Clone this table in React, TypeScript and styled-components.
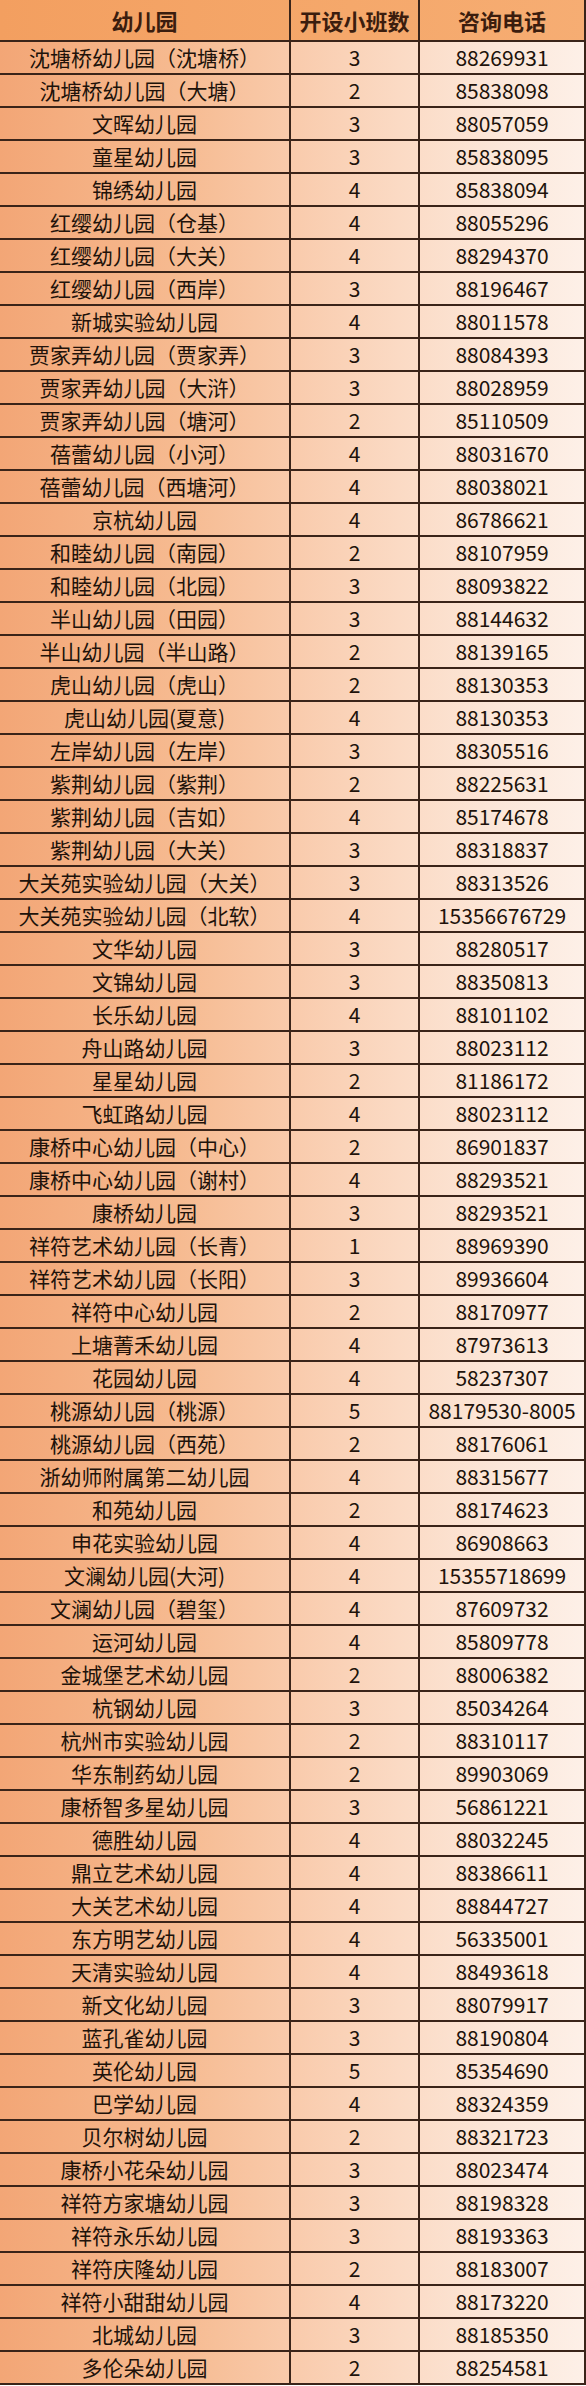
import React from 'react';
import styled, { createGlobalStyle } from 'styled-components';

const GlobalStyle = createGlobalStyle`
  html, body {
    margin: 0;
    padding: 0;
    background: #ffffff;
  }
  body {
    font-family: "Noto Sans CJK SC", "Noto Sans", "Liberation Sans", sans-serif;
  }
`;

type Row = [string, number, string];

const ROWS: Row[] = [
  ['沈塘桥幼儿园（沈塘桥）', 3, '88269931'],
  ['沈塘桥幼儿园（大塘）', 2, '85838098'],
  ['文晖幼儿园', 3, '88057059'],
  ['童星幼儿园', 3, '85838095'],
  ['锦绣幼儿园', 4, '85838094'],
  ['红缨幼儿园（仓基）', 4, '88055296'],
  ['红缨幼儿园（大关）', 4, '88294370'],
  ['红缨幼儿园（西岸）', 3, '88196467'],
  ['新城实验幼儿园', 4, '88011578'],
  ['贾家弄幼儿园（贾家弄）', 3, '88084393'],
  ['贾家弄幼儿园（大浒）', 3, '88028959'],
  ['贾家弄幼儿园（塘河）', 2, '85110509'],
  ['蓓蕾幼儿园（小河）', 4, '88031670'],
  ['蓓蕾幼儿园（西塘河）', 4, '88038021'],
  ['京杭幼儿园', 4, '86786621'],
  ['和睦幼儿园（南园）', 2, '88107959'],
  ['和睦幼儿园（北园）', 3, '88093822'],
  ['半山幼儿园（田园）', 3, '88144632'],
  ['半山幼儿园（半山路）', 2, '88139165'],
  ['虎山幼儿园（虎山）', 2, '88130353'],
  ['虎山幼儿园(夏意)', 4, '88130353'],
  ['左岸幼儿园（左岸）', 3, '88305516'],
  ['紫荆幼儿园（紫荆）', 2, '88225631'],
  ['紫荆幼儿园（吉如）', 4, '85174678'],
  ['紫荆幼儿园（大关）', 3, '88318837'],
  ['大关苑实验幼儿园（大关）', 3, '88313526'],
  ['大关苑实验幼儿园（北软）', 4, '15356676729'],
  ['文华幼儿园', 3, '88280517'],
  ['文锦幼儿园', 3, '88350813'],
  ['长乐幼儿园', 4, '88101102'],
  ['舟山路幼儿园', 3, '88023112'],
  ['星星幼儿园', 2, '81186172'],
  ['飞虹路幼儿园', 4, '88023112'],
  ['康桥中心幼儿园（中心）', 2, '86901837'],
  ['康桥中心幼儿园（谢村）', 4, '88293521'],
  ['康桥幼儿园', 3, '88293521'],
  ['祥符艺术幼儿园（长青）', 1, '88969390'],
  ['祥符艺术幼儿园（长阳）', 3, '89936604'],
  ['祥符中心幼儿园', 2, '88170977'],
  ['上塘菁禾幼儿园', 4, '87973613'],
  ['花园幼儿园', 4, '58237307'],
  ['桃源幼儿园（桃源）', 5, '88179530-8005'],
  ['桃源幼儿园（西苑）', 2, '88176061'],
  ['浙幼师附属第二幼儿园', 4, '88315677'],
  ['和苑幼儿园', 2, '88174623'],
  ['申花实验幼儿园', 4, '86908663'],
  ['文澜幼儿园(大河)', 4, '15355718699'],
  ['文澜幼儿园（碧玺）', 4, '87609732'],
  ['运河幼儿园', 4, '85809778'],
  ['金城堡艺术幼儿园', 2, '88006382'],
  ['杭钢幼儿园', 3, '85034264'],
  ['杭州市实验幼儿园', 2, '88310117'],
  ['华东制药幼儿园', 2, '89903069'],
  ['康桥智多星幼儿园', 3, '56861221'],
  ['德胜幼儿园', 4, '88032245'],
  ['鼎立艺术幼儿园', 4, '88386611'],
  ['大关艺术幼儿园', 4, '88844727'],
  ['东方明艺幼儿园', 4, '56335001'],
  ['天清实验幼儿园', 4, '88493618'],
  ['新文化幼儿园', 3, '88079917'],
  ['蓝孔雀幼儿园', 3, '88190804'],
  ['英伦幼儿园', 5, '85354690'],
  ['巴学幼儿园', 4, '88324359'],
  ['贝尔树幼儿园', 2, '88321723'],
  ['康桥小花朵幼儿园', 3, '88023474'],
  ['祥符方家塘幼儿园', 3, '88198328'],
  ['祥符永乐幼儿园', 3, '88193363'],
  ['祥符庆隆幼儿园', 2, '88183007'],
  ['祥符小甜甜幼儿园', 4, '88173220'],
  ['北城幼儿园', 3, '88185350'],
  ['多伦朵幼儿园', 2, '88254581'],
];

const Table = styled.div`
  width: 586px;
  display: flex;
  flex-direction: column;
`;

const Grid = styled.div`
  display: grid;
  grid-template-columns: 291px 129px 166px;
`;

const HeaderRow = styled(Grid)`
  height: 42px;
  background: linear-gradient(90deg, #f39f60 0%, #f5a86b 60%, #f6ad73 100%);
  border-bottom: 2px solid #3a2419;
  box-sizing: border-box;
`;

const Body = styled.div`
  display: flex;
  flex-direction: column;
  background: linear-gradient(
    90deg,
    #f3a676 0%,
    #f6ba90 30%,
    #f9cbac 50%,
    #fbdac4 68%,
    #fce7d9 85%,
    #fdf0e8 100%
  );
`;

const BodyRow = styled(Grid)`
  height: 33px;
  border-bottom: 2px solid #3a2419;
  box-sizing: border-box;
`;

const Cell = styled.div<{ $head?: boolean; $size?: number }>`
  display: flex;
  align-items: center;
  justify-content: center;
  white-space: nowrap;
  font-size: ${(p) => p.$size ?? 20}px;
  font-weight: ${(p) => (p.$head ? 700 : 400)};
  color: ${(p) => (p.$head ? '#3b1d0e' : '#20120a')};
  border-right: 2px solid #3a2419;
  box-sizing: border-box;
  line-height: 1;
  padding-bottom: 1px;
`;

export default function App() {
  return (
    <>
      <GlobalStyle />
      <Table>
        <HeaderRow>
          <Cell $head $size={22}>幼儿园</Cell>
          <Cell $head $size={22}>开设小班数</Cell>
          <Cell $head $size={22}>咨询电话</Cell>
        </HeaderRow>
        <Body>
          {ROWS.map(([name, count, phone], i) => (
            <BodyRow key={i}>
              <Cell $size={21}>{name}</Cell>
              <Cell $size={21}>{count}</Cell>
              <Cell $size={21}>{phone}</Cell>
            </BodyRow>
          ))}
        </Body>
      </Table>
    </>
  );
}
